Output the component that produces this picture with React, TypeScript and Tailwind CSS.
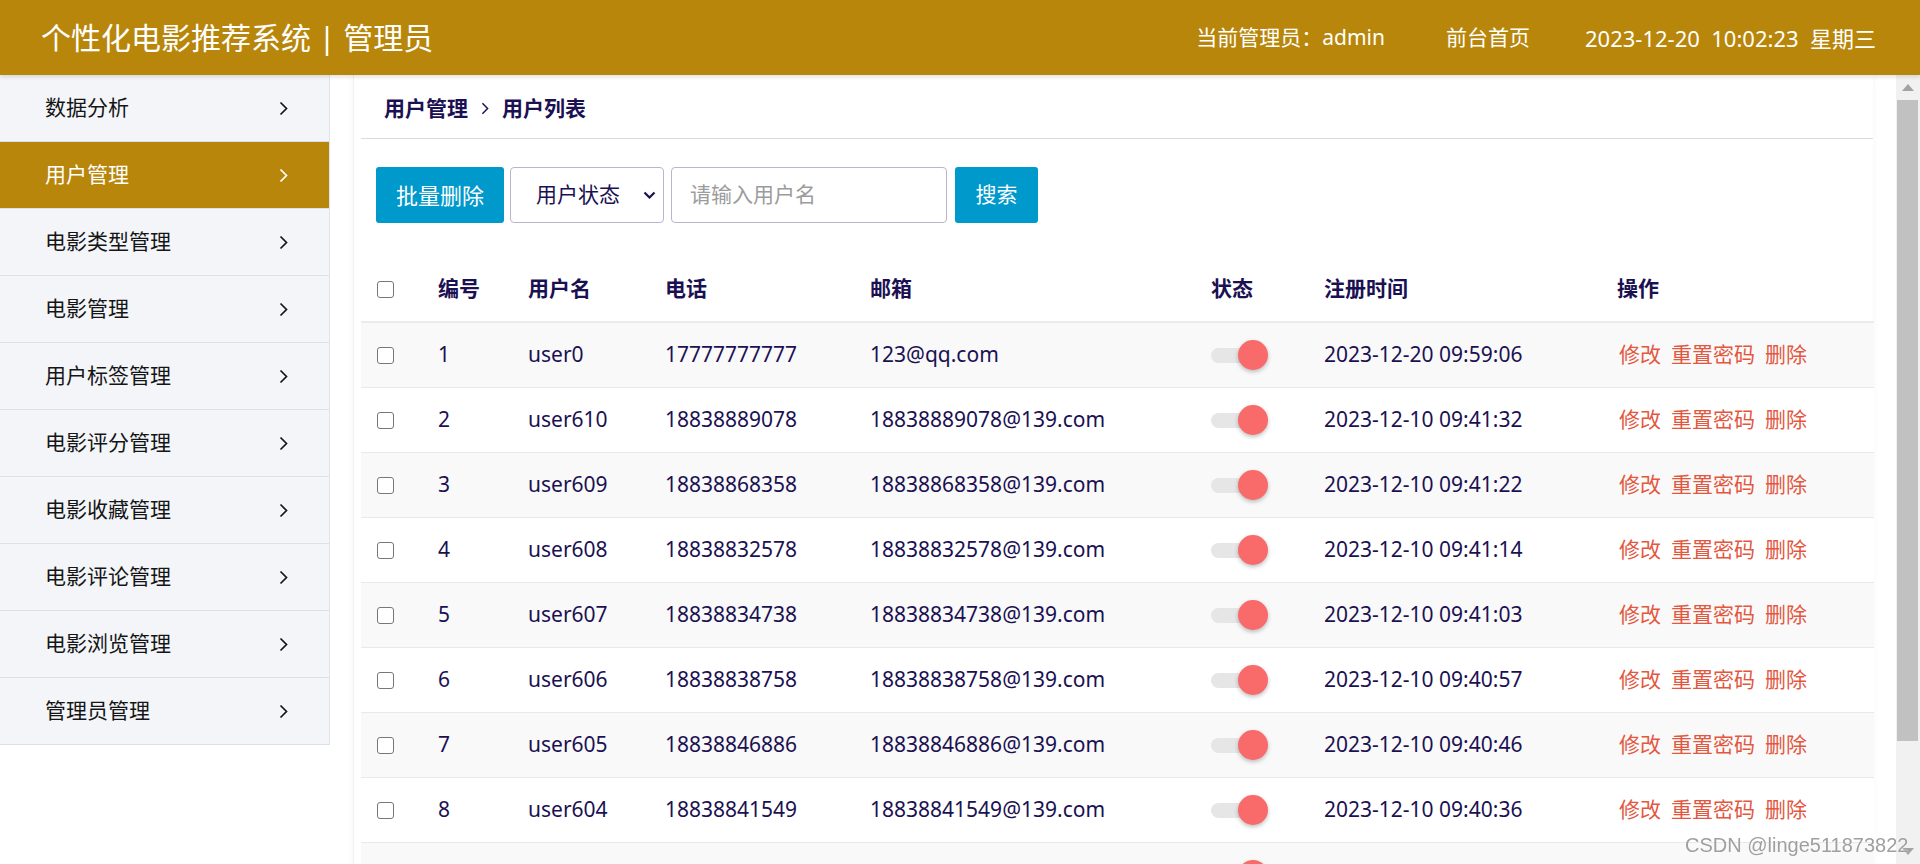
import React from 'react';

const menu = [
  '数据分析',
  '用户管理',
  '电影类型管理',
  '电影管理',
  '用户标签管理',
  '电影评分管理',
  '电影收藏管理',
  '电影评论管理',
  '电影浏览管理',
  '管理员管理',
];

const users = [
  { id: 1, name: 'user0', phone: '17777777777', email: '123@qq.com', time: '2023-12-20 09:59:06' },
  { id: 2, name: 'user610', phone: '18838889078', email: '18838889078@139.com', time: '2023-12-10 09:41:32' },
  { id: 3, name: 'user609', phone: '18838868358', email: '18838868358@139.com', time: '2023-12-10 09:41:22' },
  { id: 4, name: 'user608', phone: '18838832578', email: '18838832578@139.com', time: '2023-12-10 09:41:14' },
  { id: 5, name: 'user607', phone: '18838834738', email: '18838834738@139.com', time: '2023-12-10 09:41:03' },
  { id: 6, name: 'user606', phone: '18838838758', email: '18838838758@139.com', time: '2023-12-10 09:40:57' },
  { id: 7, name: 'user605', phone: '18838846886', email: '18838846886@139.com', time: '2023-12-10 09:40:46' },
  { id: 8, name: 'user604', phone: '18838841549', email: '18838841549@139.com', time: '2023-12-10 09:40:36' },
  { id: 9, name: 'user603', phone: '18838847731', email: '18838847731@139.com', time: '2023-12-10 09:40:25' },
  { id: 10, name: 'user602', phone: '18838852917', email: '18838852917@139.com', time: '2023-12-10 09:40:13' },
];

const cols = 'grid grid-cols-[61px_90px_137px_205px_341px_113px_293px_273px]';

function Chevron({ className = '' }: { className?: string }) {
  return (
    <svg width="9" height="15" viewBox="0 0 9 15" fill="none" stroke="currentColor" strokeWidth="1.7" className={className}>
      <polyline points="1.5,1.5 7.5,7.5 1.5,13.5" />
    </svg>
  );
}

function Checkbox() {
  return <span className="block w-[17px] h-[17px] border-[1.5px] border-[#777777] rounded-[3px] bg-white" />;
}

function Toggle() {
  return (
    <span className="relative block w-[56px] h-[15px] rounded-full bg-[#e6e6e6]">
      <span className="absolute left-[27px] top-1/2 -translate-y-1/2 w-[30px] h-[30px] rounded-full bg-[#f96a6a] shadow-[0_2px_4px_rgba(0,0,0,0.25)]" />
    </span>
  );
}

// classic windows-style vertical scrollbar of the content area
function ScrollBar() {
  return (
    <div className="w-[24px] shrink-0 bg-[#f1f1f1] flex flex-col">
      <div className="h-[25px] flex items-center justify-center">
        <svg width="12" height="7" viewBox="0 0 12 7">
          <polygon points="0,7 6,0 12,7" fill="#a3a3a3" />
        </svg>
      </div>
      <div className="h-[641px] ml-[1px] mr-[2px] bg-[#c1c1c1]" />
      <div className="flex-1" />
      <div className="h-[25px] flex items-center justify-center">
        <svg width="12" height="7" viewBox="0 0 12 7">
          <polygon points="0,0 12,0 6,7" fill="#a3a3a3" />
        </svg>
      </div>
    </div>
  );
}

export default function App() {
  return (
    <div
      className="h-screen flex flex-col overflow-hidden bg-white text-[#1b1152]"
      style={{ fontFamily: '"Noto Sans", "Noto Sans CJK SC", sans-serif' }}
    >
      {/* Header */}
      <header className="h-[75px] shrink-0 bg-[#b8860b] text-white flex items-center pl-[41px] pr-[44px] shadow-[0_2px_4px_rgba(0,0,0,0.12)] z-10">
        <div className="text-[30px] leading-none">个性化电影推荐系统 | 管理员</div>
        <div className="ml-auto flex items-center text-[21px] leading-none">
          <span>当前管理员：admin</span>
          <span className="ml-[61px]">前台首页</span>
          <span className="ml-[55px] text-[22px] whitespace-pre">2023-12-20  10:02:23  星期三</span>
        </div>
      </header>

      <div className="flex-1 min-h-0 flex">
        <div className="flex-1 overflow-hidden">
          <div className="flex">
            {/* Sidebar */}
            <nav className="w-[330px] shrink-0 self-start bg-[#f3f5f9] border-r border-[#e1e4ea]">
              {menu.map((m) => {
                const active = m === '用户管理';
                return (
                  <div
                    key={m}
                    className={`h-[67px] border-b border-[#dde1e7] flex items-center justify-between pl-[45px] pr-[41px] text-[21px] ${
                      active ? 'bg-[#b8860b] text-white' : 'text-[#151515]'
                    }`}
                  >
                    <span>{m}</span>
                    <Chevron />
                  </div>
                );
              })}
            </nav>

            {/* Main panel */}
            <main className="ml-[23px] w-[1520px] shrink-0 bg-white pl-[7px] pb-[31px] border-l border-[#f0f0f0] shadow-[0_0_8px_rgba(0,0,0,0.04)]">
              <div className="h-[64px] border-b border-[#dcdcdc] flex items-center pl-[23px] pt-[4px] text-[21px] font-bold">
                <span>用户管理</span>
                <Chevron className="mx-[13px] w-[8px] h-[13px]" />
                <span>用户列表</span>
              </div>

              {/* Toolbar */}
              <div className="mt-[28px] ml-[15px] flex h-[56px]">
                <button className="w-[128px] h-full bg-[#0099cc] text-white rounded-[3px] text-[22px]">批量删除</button>
                <div className="ml-[6px] w-[154px] h-full border border-[#b9b5cf] rounded-[4px] flex items-center pl-[25px] pr-[7px] text-[21px]">
                  <span>用户状态</span>
                  <svg width="13" height="8" viewBox="0 0 13 8" fill="none" stroke="currentColor" strokeWidth="2.2" className="ml-auto">
                    <polyline points="1.5,1.5 6.5,6.5 11.5,1.5" />
                  </svg>
                </div>
                <div className="ml-[7px] w-[276px] h-full border border-[#b9b5cf] rounded-[4px] flex items-center pl-[18px] text-[21px] text-[#9c9c9c]">
                  请输入用户名
                </div>
                <button className="ml-[8px] w-[83px] h-full bg-[#0099cc] text-white rounded-[3px] text-[21px]">搜索</button>
              </div>

              {/* Table */}
              <div className="mt-[34px] w-[1513px] text-[21px]">
                <div className={`${cols} h-[66px] items-center border-b-2 border-[#ebebeb] font-bold`}>
                  <div className="pl-[16px]"><Checkbox /></div>
                  <div className="pl-[16px]">编号</div>
                  <div className="pl-[16px]">用户名</div>
                  <div className="pl-[16px]">电话</div>
                  <div className="pl-[16px]">邮箱</div>
                  <div className="pl-[16px]">状态</div>
                  <div className="pl-[16px]">注册时间</div>
                  <div className="pl-[16px]">操作</div>
                </div>
                {users.map((u, i) => (
                  <div
                    key={u.id}
                    className={`${cols} h-[65px] items-center border-b border-[#e9e9e9] ${i % 2 === 0 ? 'bg-[#f9f9f9]' : 'bg-white'}`}
                  >
                    <div className="pl-[16px]"><Checkbox /></div>
                    <div className="pl-[16px]">{u.id}</div>
                    <div className="pl-[16px]">{u.name}</div>
                    <div className="pl-[16px]">{u.phone}</div>
                    <div className="pl-[16px]">{u.email}</div>
                    <div className="pl-[16px]"><Toggle /></div>
                    <div className="pl-[16px]">{u.time}</div>
                    <div className="pl-[18px] flex gap-[10px] text-[#e3573f]">
                      <span>修改</span>
                      <span>重置密码</span>
                      <span>删除</span>
                    </div>
                  </div>
                ))}
              </div>
            </main>
          </div>
        </div>
        <ScrollBar />
      </div>

      {/* Watermark */}
      <div
        className="fixed left-[1685px] top-[830px] text-[20px] text-[#9f9f9f] z-20 pointer-events-none"
        style={{ fontFamily: '"Liberation Sans", Arial, sans-serif', textShadow: '0 0 2px #ffffff' }}
      >
        CSDN @linge511873822
      </div>
    </div>
  );
}
